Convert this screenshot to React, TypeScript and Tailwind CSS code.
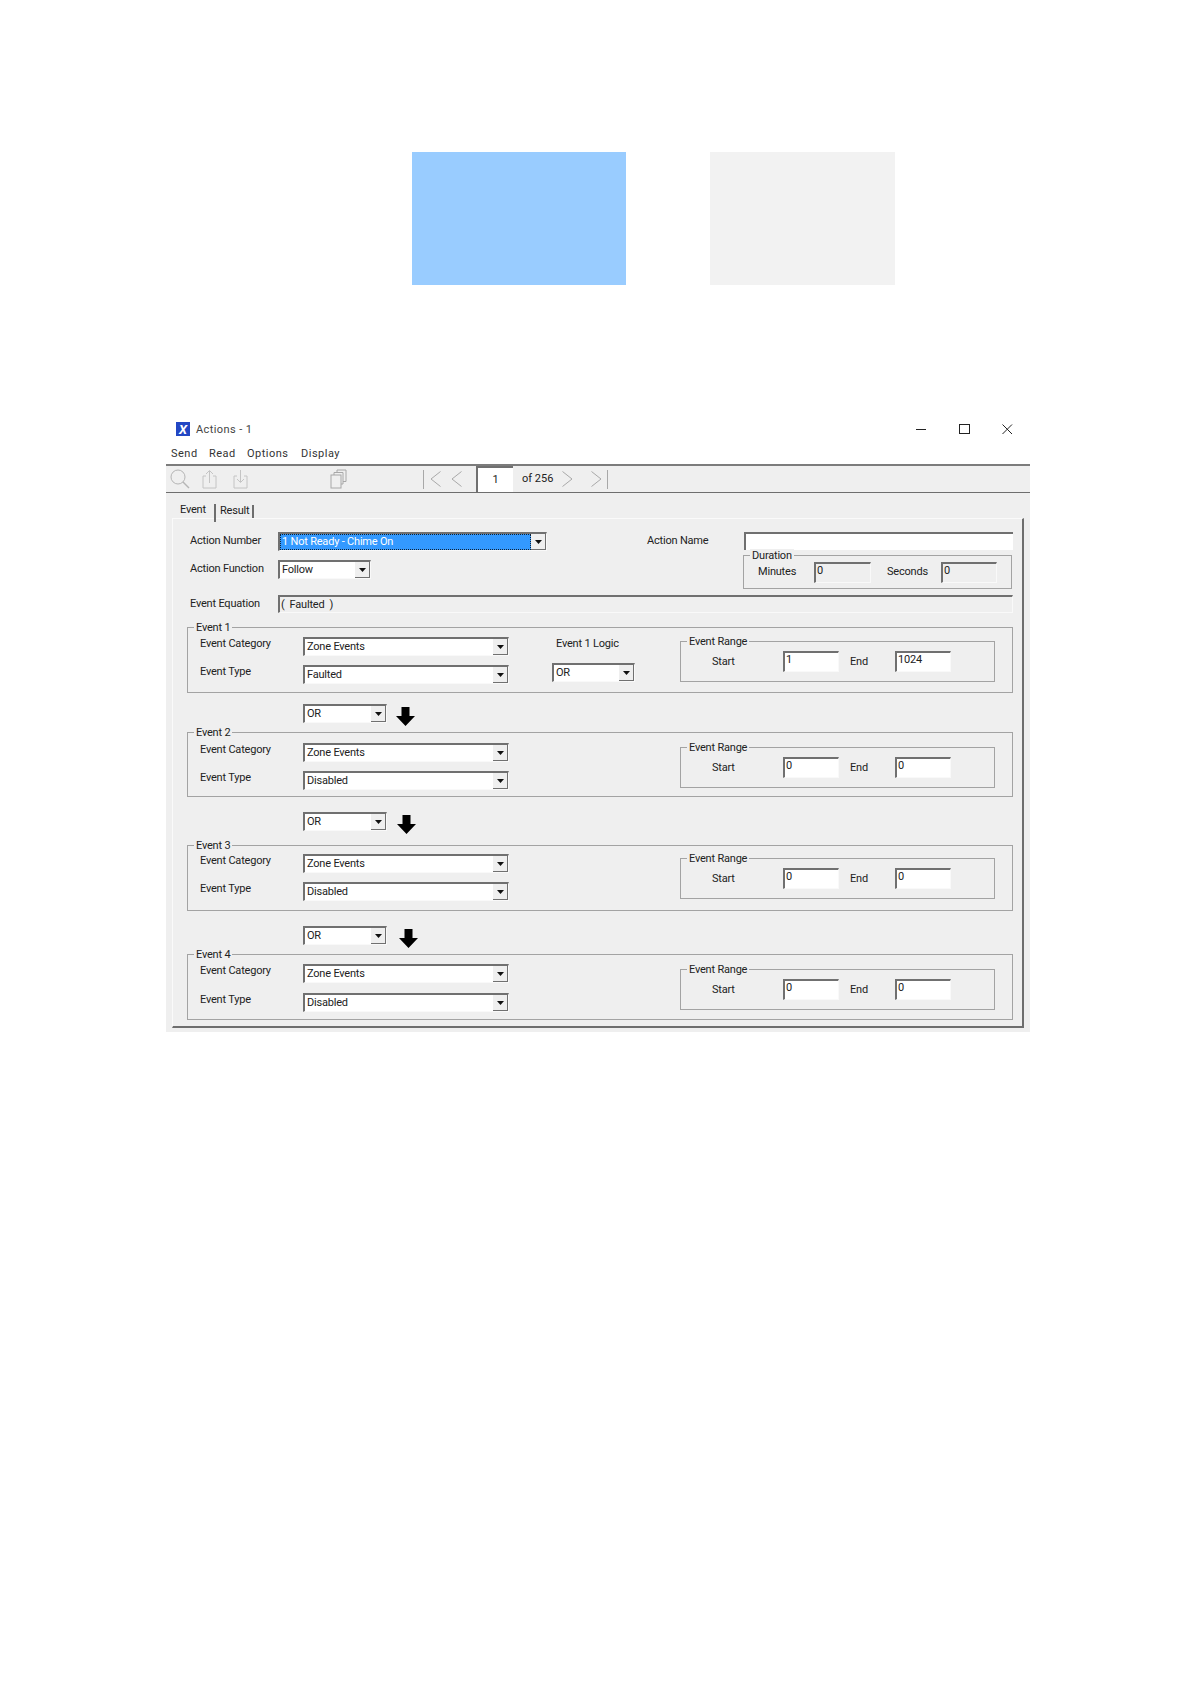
import React from 'react';

const Caret = () => (
  <svg width="7" height="4" viewBox="0 0 7 4" className="block">
    <polygon points="0,0 7,0 3.5,4" fill="#111" />
  </svg>
);

const Combo = ({ text, width, selected }: { text: string; width: string; selected?: boolean }) => (
  <div className={`${width} h-[19px] flex shrink-0 bg-white border-t-2 border-l-2 border-t-[#707070] border-l-[#707070] border-r border-b border-r-[#f9f9f9] border-b-[#f9f9f9]`}>
    <div className={`flex-1 pl-[2px] leading-[16px] whitespace-nowrap ${selected ? 'bg-[#3399ff] text-white outline-1 outline-dotted outline-[#123] -outline-offset-1' : 'text-[#222]'}`}>{text}</div>
    <div className="w-[15px] h-full bg-[#efefef] flex items-center justify-center border-r border-b border-r-[#707070] border-b-[#707070]">
      <Caret />
    </div>
  </div>
);

const Input = ({ value, width, disabled }: { value?: string; width: string; disabled?: boolean }) => (
  <div className={`${width} h-[21px] shrink-0 pl-[1px] leading-[14px] border-t-2 border-l-2 border-t-[#707070] border-l-[#707070] border-r border-b border-r-[#f9f9f9] border-b-[#f9f9f9] text-[#222] ${disabled ? 'bg-[#efefef]' : 'bg-white'}`}>
    {value}
  </div>
);

const Legend = ({ text }: { text: string }) => (
  <span className="absolute left-[6px] -top-[7px] bg-[#efefef] px-[2px] leading-[14px] text-[#222] whitespace-nowrap">{text}</span>
);

const Arrow = () => (
  <svg width="19" height="19" viewBox="0 0 19 19" className="block">
    <polygon points="5.5,0 13.5,0 13.5,9 19,9 9.5,19 0,9 5.5,9" fill="#000" />
  </svg>
);

const EventRow = ({ label, value, gap }: { label: string; value: string; gap?: string }) => (
  <div className={`flex items-start ${gap ?? ''}`}>
    <span className="w-[103px] leading-[14px] text-[#222]">{label}</span>
    <Combo text={value} width="w-[206px]" />
  </div>
);

interface EventGroupProps {
  n: number;
  type: string;
  box: string;
  top: string;
  gap: string;
  rangeTop: string;
  logic?: boolean;
  start: string;
  end: string;
}

const EventGroup = ({ n, type, box, top, gap, rangeTop, logic, start, end }: EventGroupProps) => (
  <div className={`relative flex items-start border border-[#a3a3a3] ${box}`}>
    <Legend text={`Event ${n}`} />
    <div className={`pl-[12px] ${top}`}>
      <EventRow label="Event Category" value="Zone Events" />
      <EventRow label="Event Type" value={type} gap={gap} />
    </div>
    {logic && (
      <div className={`ml-[43px] ${top}`}>
        <div className="pl-[4px] leading-[14px] text-[#222]">Event 1 Logic</div>
        <div className="mt-[12px]">
          <Combo text="OR" width="w-[83px]" />
        </div>
      </div>
    )}
    <div className={`relative ml-auto mr-[17px] w-[315px] h-[41px] border border-[#a3a3a3] flex items-center pl-[31px] ${rangeTop}`}>
      <Legend text="Event Range" />
      <span className="w-[71px] pt-[2px] text-[#222]">Start</span>
      <Input value={start} width="w-[56px]" />
      <span className="ml-[11px] w-[45px] pt-[2px] text-[#222]">End</span>
      <Input value={end} width="w-[56px]" />
    </div>
  </div>
);

const OrRow = ({ box, arrow }: { box: string; arrow: string }) => (
  <div className={`flex items-start h-[19px] ml-[116px] ${box}`}>
    <Combo text="OR" width="w-[84px]" />
    <div className={`mt-[3px] ${arrow}`}>
      <Arrow />
    </div>
  </div>
);

export default function App() {
  return (
    <div className="w-[1191px] h-[1683px] bg-white pt-[152px] text-[11px] tracking-[-0.2px] font-['Roboto',Arial,sans-serif] overflow-hidden">
      <div className="flex ml-[412px]">
        <div className="w-[214px] h-[133px] bg-[#99ccff]" />
        <div className="ml-[84px] w-[185px] h-[133px] bg-[#f2f2f2]" />
      </div>

      <div className="ml-[166px] mt-[130px] w-[864px]">
        {/* title bar */}
        <div className="h-[28px] flex items-center pl-[10px] pr-[17px]">
          <div className="w-[14px] h-[14px] bg-[#2347c4] flex items-center justify-center text-white text-[13px] leading-none font-bold italic">X</div>
          <span className="ml-[6px] pt-[3px] text-[#444] tracking-[0.4px]">Actions - 1</span>
          <div className="ml-auto flex items-center">
            <svg width="11" height="11" viewBox="0 0 11 11"><line x1="0" y1="5.5" x2="10" y2="5.5" stroke="#222" /></svg>
            <svg className="ml-[32px]" width="11" height="11" viewBox="0 0 11 11"><rect x="0.5" y="0.5" width="10" height="9" fill="none" stroke="#222" /></svg>
            <svg className="ml-[32px]" width="11" height="11" viewBox="0 0 11 11"><path d="M0.5 0.5 L10 10 M10 0.5 L0.5 10" stroke="#222" fill="none" /></svg>
          </div>
        </div>

        {/* menu */}
        <div className="h-[21px] flex items-center pl-[5px] pt-[2px] text-[#333] tracking-[0.5px]">
          <span className="w-[38px]">Send</span>
          <span className="w-[38px]">Read</span>
          <span className="w-[54px]">Options</span>
          <span>Display</span>
        </div>

        {/* toolbar */}
        <div className="h-[29px] bg-[#efefef] border-t-2 border-b border-t-[#7c7c7c] border-b-[#6e6e6e] flex items-center text-[#222]">
          <svg className="ml-[4px]" width="20" height="20" viewBox="0 0 20 20" fill="none" stroke="#b5b5b5">
            <circle cx="8" cy="8" r="7" />
            <path d="M13 13 L19 19" strokeWidth="1.4" />
          </svg>
          <svg className="ml-[12px]" width="16" height="20" viewBox="0 0 16 20" fill="none" stroke="#c4c4c4">
            <path d="M4 7 H1 V19 H14 V7 H11" />
            <path d="M7.5 14 V2 M4 5 L7.5 1.5 L11 5" />
          </svg>
          <svg className="ml-[15px]" width="16" height="20" viewBox="0 0 16 20" fill="none" stroke="#c4c4c4">
            <path d="M4 7 H1 V19 H14 V7 H11" />
            <path d="M7.5 1 V13 M4 10 L7.5 13.5 L11 10" />
          </svg>
          <svg className="ml-[81px]" width="17" height="20" viewBox="0 0 17 20" fill="none" stroke="#a8a8a8">
            <rect x="1" y="6" width="10" height="13" />
            <path d="M4 6 V3.5 H13 V15 H11 M7 3.5 V1 H16 V12.5 H13" />
          </svg>
          <div className="ml-[76px] w-px h-[19px] bg-[#a8a8a8]" />
          <svg className="ml-[6px]" width="11" height="16" viewBox="0 0 11 16" fill="none" stroke="#a8a8a8"><path d="M10.5 0.5 L1 8 L10.5 15.5" /></svg>
          <svg className="ml-[10px]" width="11" height="16" viewBox="0 0 11 16" fill="none" stroke="#a8a8a8"><path d="M10.5 0.5 L1 8 L10.5 15.5" /></svg>
          <div className="ml-[14px] w-[37px] h-[26px] bg-white border-t-2 border-l-2 border-t-[#707070] border-l-[#707070] flex items-center justify-center">1</div>
          <span className="ml-[9px] w-[40px] tracking-normal">of 256</span>
          <svg width="11" height="16" viewBox="0 0 11 16" fill="none" stroke="#a8a8a8"><path d="M0.5 0.5 L10 8 L0.5 15.5" /></svg>
          <svg className="ml-[18px]" width="11" height="16" viewBox="0 0 11 16" fill="none" stroke="#a8a8a8"><path d="M0.5 0.5 L10 8 L0.5 15.5" /></svg>
          <div className="ml-[5px] w-px h-[19px] bg-[#a8a8a8]" />
        </div>

        {/* body */}
        <div className="h-[539px] bg-[#efefef] pt-[12px] pl-[6px]">
          <div className="h-[13px] flex items-start text-[#222]">
            <div className="w-[44px] h-[18px] pl-[8px] -mt-[1px] leading-[11px] border-r-2 border-r-[#6e6e6e] relative z-10">Event</div>
            <div className="w-[38px] h-[13px] pl-[4px] leading-[12px] border-r-2 border-r-[#6e6e6e]">Result</div>
          </div>
          <div className="w-[852px] h-[510px] border-t border-l border-t-[#fafafa] border-l-[#fafafa] border-r-2 border-b-2 border-r-[#6e6e6e] border-b-[#6e6e6e] pt-[13px] pl-[14px] pr-[9px]">
            <div className="flex">
              <div className="w-[460px]">
                <div className="flex items-center text-[#222]">
                  <span className="w-[91px] pl-[3px]">Action Number</span>
                  <Combo text="1 Not Ready - Chime On" width="w-[269px]" selected />
                </div>
                <div className="flex items-center mt-[9px] text-[#222]">
                  <span className="w-[91px] pl-[3px]">Action Function</span>
                  <Combo text="Follow" width="w-[93px]" />
                </div>
              </div>
              <div className="w-[366px]">
                <div className="flex items-center text-[#222]">
                  <span className="w-[97px]">Action Name</span>
                  <div className="w-[269px] h-[18px] bg-white border-t-2 border-l-2 border-t-[#707070] border-l-[#707070]" />
                </div>
                <div className="relative ml-[96px] mt-[5px] w-[269px] h-[34px] border border-[#a3a3a3] flex items-center pl-[14px] text-[#222]">
                  <Legend text="Duration" />
                  <span className="w-[56px]">Minutes</span>
                  <Input value="0" width="w-[57px]" disabled />
                  <span className="ml-[16px] w-[54px]">Seconds</span>
                  <Input value="0" width="w-[56px]" disabled />
                </div>
              </div>
            </div>

            <div className="flex items-center mt-[6px] text-[#222]">
              <span className="w-[91px] pl-[3px]">Event Equation</span>
              <div className="flex-1 h-[18px] pl-[1px] leading-[16px] whitespace-pre border-t-2 border-l-2 border-t-[#707070] border-l-[#707070] border-r border-b border-r-[#f9f9f9] border-b-[#f9f9f9]">{'(  Faulted  )'}</div>
            </div>

            <EventGroup n={1} type="Faulted" box="mt-[14px] h-[66px]" top="pt-[9px]" gap="mt-[9px]" rangeTop="mt-[13px]" logic start="1" end="1024" />
            <OrRow box="mt-[11px]" arrow="ml-[9px]" />
            <EventGroup n={2} type="Disabled" box="mt-[9px] h-[65px]" top="pt-[10px]" gap="mt-[9px]" rangeTop="mt-[14px]" start="0" end="0" />
            <OrRow box="mt-[15px]" arrow="ml-[10px]" />
            <EventGroup n={3} type="Disabled" box="mt-[14px] h-[66px]" top="pt-[8px]" gap="mt-[9px]" rangeTop="mt-[12px]" start="0" end="0" />
            <OrRow box="mt-[15px]" arrow="ml-[12px]" />
            <EventGroup n={4} type="Disabled" box="mt-[9px] h-[66px]" top="pt-[9px]" gap="mt-[10px]" rangeTop="mt-[14px]" start="0" end="0" />
          </div>
        </div>
      </div>
    </div>
  );
}
